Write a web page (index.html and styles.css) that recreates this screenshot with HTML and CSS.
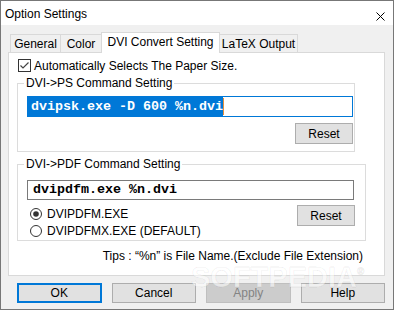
FILE: index.html
```html
<!DOCTYPE html>
<html>
<head>
<meta charset="utf-8">
<link rel="stylesheet" href="styles.css">
</head>
<body>
<div class="window">
  <div class="titlebar">
    <span class="title">Option Settings</span>
    <svg class="close" width="9" height="9" viewBox="0 0 9 9"><path d="M0.5 0.5L8.5 8.5M8.5 0.5L0.5 8.5" stroke="#000" stroke-width="1" fill="none"/></svg>
  </div>
  <div class="client">
    <div class="tabs">
      <div class="tab t-general">General</div>
      <div class="tab t-color">Color</div>
      <div class="tab t-dvi active">DVI Convert Setting</div>
      <div class="tab t-latex">LaTeX Output</div>
    </div>
    <div class="panel">
      <div class="check-row">
        <svg class="checkbox" width="13" height="13" viewBox="0 0 13 13"><rect x="0.5" y="0.5" width="12" height="12" fill="#fff" stroke="#333"/><polyline points="2.5,6.5 5,9 10.5,3.5" fill="none" stroke="#444" stroke-width="1.2"/></svg>
        <span>Automatically Selects The Paper Size.</span>
      </div>
      <fieldset class="group g-ps">
        <legend>DVI-&gt;PS Command Setting</legend>
        <div class="group-body">
          <div class="edit edit-focus"><span class="sel">dvipsk.exe -D 600 %n.dvi</span><span class="caret"></span></div>
          <div class="btn-row btn-row-ps"><div class="btn reset">Reset</div></div>
        </div>
      </fieldset>
      <fieldset class="group g-pdf">
        <legend>DVI-&gt;PDF Command Setting</legend>
        <div class="group-body group-body-pdf">
          <div class="edit edit-plain">dvipdfm.exe %n.dvi</div>
          <div class="btn-row btn-row-pdf">
            <div class="radios">
              <div class="radio-row">
                <svg width="12" height="12" viewBox="0 0 12 12"><circle cx="6" cy="6" r="5.5" fill="#fff" stroke="#333"/><circle cx="6" cy="6" r="2.8" fill="#333"/></svg>
                <span>DVIPDFM.EXE</span>
              </div>
              <div class="radio-row">
                <svg width="12" height="12" viewBox="0 0 12 12"><circle cx="6" cy="6" r="5.5" fill="#fff" stroke="#333"/></svg>
                <span>DVIPDFMX.EXE (DEFAULT)</span>
              </div>
            </div>
            <div class="btn reset">Reset</div>
          </div>
        </div>
      </fieldset>
      <div class="tips">Tips : “%n” is File Name.(Exclude File Extension)</div>
    </div>
    <div class="buttons">
      <div class="btn dlg default">OK</div>
      <div class="btn dlg">Cancel</div>
      <div class="btn dlg disabled">Apply</div>
      <div class="btn dlg">Help</div>
    </div>
  </div>
  <div class="watermark">SOFTPEDIA<sup>®</sup></div>
</div>
</body>
</html>
```
FILE: styles.css
```css
* { box-sizing: border-box; }
html, body { margin: 0; padding: 0; background: #fff; }
body {
  font-family: "Liberation Sans", Arial, sans-serif;
  font-size: 12px;
  line-height: 14px;
  color: #000;
}
.window {
  width: 394px;
  height: 310px;
  border: 1px solid #777;
  background: #f0f0f0;
  position: relative;
  display: flex;
  flex-direction: column;
  overflow: hidden;
}
.titlebar {
  flex: none;
  height: 24px;
  background: #fff;
  display: flex;
  justify-content: space-between;
  align-items: flex-start;
  padding: 6px 8px 0 4px;
}
.close { margin-top: 5px; }
.client {
  flex: 1;
  display: flex;
  flex-direction: column;
  padding: 7px 8px 6px 7px;
}
.tabs {
  display: flex;
  align-items: flex-end;
  height: 20px;
  margin-left: 2px;
}
.tab {
  height: 18px;
  border: 1px solid #d9d9d9;
  border-bottom: none;
  padding-top: 2px;
  text-align: center;
  white-space: nowrap;
  background: #f0f0f0;
}
.tab + .tab { margin-left: -1px; }
.t-general { width: 51px; }
.t-color { width: 42px; }
.t-dvi { width: 119px; }
.t-latex { width: 79px; }
.tab.active {
  height: 21px;
  margin-bottom: -1px;
  background: #fff;
  position: relative;
  z-index: 1;
}
.panel {
  height: 224px;
  border: 1px solid #d9d9d9;
  background: #fff;
  padding-left: 8px;
}
.check-row {
  display: flex;
  align-items: center;
  height: 13px;
  margin-top: 6px;
  margin-left: 1px;
  gap: 3px;
}
.checkbox { flex: none; }
.group {
  margin: 0;
  padding: 0;
  border: 1px solid #dcdcdc;
  min-width: 0;
}
.group legend {
  padding: 0 2px;
  margin-left: 6px;
  line-height: 14px;
}
.g-ps { width: 338px; margin-top: 4px; }
.g-pdf { width: 349px; margin-top: 5px; }
.group-body { padding: 6px 0 7px 9px; }
.group-body-pdf { padding: 9px 0 1px 9px; }
.edit {
  background: #fff;
  display: flex;
  align-items: center;
  font-family: "Liberation Mono", "DejaVu Sans Mono", monospace;
  font-weight: bold;
  font-size: 13.33px;
  white-space: pre;
}
.edit-focus {
  width: 326px;
  height: 21px;
  border: 1px solid #0078d7;
  padding: 0;
}
.sel {
  background: #0078d7;
  color: #fff;
  height: 19px;
  line-height: 19px;
  padding-left: 3px;
}
.caret {
  width: 1px;
  height: 17px;
  background: #e5903f;
}
.edit-plain {
  width: 327px;
  height: 20px;
  border: 1px solid #7a7a7a;
  padding-left: 5px;
  line-height: 18px;
}
.btn-row { display: flex; justify-content: flex-end; }
.btn-row-ps { width: 326px; margin-top: 6px; }
.btn-row-pdf {
  width: 328px;
  margin-top: 5px;
  justify-content: space-between;
  align-items: flex-start;
}
.btn {
  background: #e1e1e1;
  border: 1px solid #adadad;
  display: flex;
  align-items: center;
  justify-content: center;
}
.reset { width: 58px; height: 21px; }
.radios { margin-left: 3px; }
.radio-row {
  display: flex;
  align-items: center;
  height: 17px;
  gap: 5px;
}
.radio-row svg { flex: none; }
.tips {
  margin-top: 8px;
  text-align: right;
  padding-right: 21px;
}
.buttons {
  display: flex;
  gap: 10px;
  margin-top: 7px;
  padding-left: 9px;
}
.dlg { width: 85px; height: 20px; }
.dlg.default { border: 2px solid #0078d7; }
.dlg.disabled {
  background: #cccccc;
  border-color: #bfbfbf;
  color: #838383;
}
.watermark {
  position: absolute;
  left: 190px;
  top: 266px;
  font-family: "Liberation Sans", Arial, sans-serif;
  font-weight: bold;
  font-size: 29px;
  line-height: 21px;
  height: 21px;
  color: rgba(255, 255, 255, 0.55);
  -webkit-text-stroke: 1px rgba(0, 0, 0, 0.06);
  pointer-events: none;
}
.watermark sup { font-size: 10px; vertical-align: top; line-height: 10px; }
```
